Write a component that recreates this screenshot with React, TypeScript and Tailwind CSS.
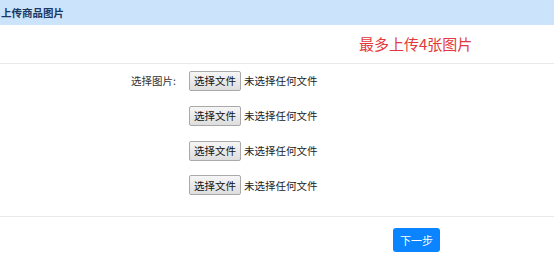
const font = { fontFamily: '"Noto Sans CJK SC", "Liberation Sans", sans-serif' };

function FilePick() {
  return (
    <div className="flex items-center h-[20px]">
      <span className="h-[20px] w-[52px] flex items-center justify-center border border-[#a9a9a9] rounded-[2px] bg-gradient-to-b from-[#f6f6f6] to-[#dedede] text-[10.5px] text-[#111]">
        选择文件
      </span>
      <span className="ml-[3px] text-[10.5px] text-[#222]">未选择任何文件</span>
    </div>
  );
}

export default function App() {
  return (
    <div className="w-[554px] h-[258px] bg-white overflow-hidden" style={font}>
      <div className="h-[25px] bg-[#cce4fb] flex items-center pl-[1px] text-[10.5px] font-bold text-[#1b3866]">
        上传商品图片
      </div>
      <div className="h-[39px] border-b border-[#e8e8e8] flex items-center pb-[2px]">
        <span className="ml-[359px] text-[15px] text-[#e4393c] leading-none">最多上传4张图片</span>
      </div>
      <div className="h-[153px] border-b border-[#e8e8e8]">
        {[0, 1, 2, 3].map((i) => (
          <div key={i} className="flex items-center h-[34.7px]">
            <div className="w-[176px] text-right text-[10.5px] text-[#333]">
              {i === 0 ? "选择图片:" : ""}
            </div>
            <div className="ml-[13px]">
              <FilePick />
            </div>
          </div>
        ))}
      </div>
      <div className="pt-[9px] pl-[393px]">
        <button className="w-[47px] h-[24px] rounded-[3px] bg-[#0a84ff] text-white text-[11px]">下一步</button>
      </div>
    </div>
  );
}
